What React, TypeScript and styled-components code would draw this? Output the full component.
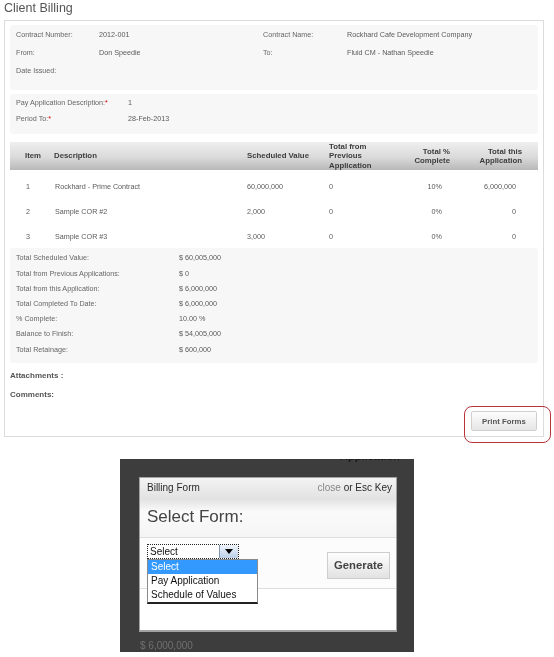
import React from "react";
import styled, { createGlobalStyle } from "styled-components";

const Global = createGlobalStyle`
  html, body { margin: 0; padding: 0; background: #fff; }
  body {
    font-family: "Liberation Sans", Arial, sans-serif;
    width: 554px;
    height: 657px;
    overflow: hidden;
  }
  * { box-sizing: border-box; }
`;

const Page = styled.div`
  display: flex;
  flex-direction: column;
  width: 554px;
  will-change: transform;
`;

const Title = styled.h1`
  margin: 0 0 0 4px;
  height: 20px;
  padding-top: 1px;
  font-size: 12.5px;
  line-height: 15px;
  font-weight: normal;
  color: #555;
`;

const Panel = styled.div`
  margin-left: 4px;
  width: 540px;
  height: 417px;
  border: 1px solid #dcdcdc;
  padding: 4px 5px 5px;
  display: flex;
  flex-direction: column;
`;

const InfoSection = styled.div<{ $cols: string; $row: number; $pad: string; $gap?: number }>`
  background: #f7f7f7;
  border-radius: 3px;
  display: grid;
  grid-template-columns: ${(p) => p.$cols};
  grid-auto-rows: ${(p) => p.$row}px;
  align-items: center;
  padding: ${(p) => p.$pad};
  margin-top: ${(p) => p.$gap ?? 0}px;
  font-size: 7.2px;
  line-height: 9px;
`;

const Label = styled.span`
  color: #666;
  white-space: nowrap;
`;

const Value = styled.span`
  color: #5a5a5a;
  white-space: nowrap;
`;

const Req = styled.span`
  color: #d40000;
`;

const Grid = styled.table`
  width: 528px;
  border-collapse: collapse;
  table-layout: fixed;
  margin-top: 8px;
`;

const Th = styled.th<{ $align?: string; $pr?: number; $pl?: number }>`
  height: 28px;
  padding: 0 ${(p) => p.$pr ?? 0}px 0 ${(p) => p.$pl ?? 0}px;
  text-align: ${(p) => p.$align ?? "left"};
  font-size: 7.8px;
  line-height: 9.5px;
  font-weight: bold;
  color: #3c3c3c;
  vertical-align: middle;
  white-space: nowrap;
  background: linear-gradient(#efefef, #dadada 55%, #b8b8b8);
`;

const Td = styled.td<{ $align?: string; $pr?: number; $pl?: number }>`
  height: 25px;
  padding: 8px ${(p) => p.$pr ?? 0}px 0 ${(p) => p.$pl ?? 0}px;
  text-align: ${(p) => p.$align ?? "left"};
  font-size: 7.2px;
  line-height: 17px;
  color: #5a5a5a;
  vertical-align: top;
  white-space: nowrap;
`;

const NoteLine = styled.div<{ $first?: boolean }>`
  margin-top: ${(p) => (p.$first ? 3 : 0)}px;
  font-size: 8px;
  line-height: 19px;
  font-weight: bold;
  color: #555;
`;

const ActionRow = styled.div`
  display: flex;
  justify-content: flex-end;
  margin-top: 7px;
  padding-right: 1px;
`;

const ActionWrap = styled.span`
  position: relative;
  display: inline-flex;
`;

const PrintButton = styled.button`
  width: 66px;
  height: 20px;
  padding: 0;
  border: 1px solid #cfcfcf;
  border-radius: 2px;
  background: linear-gradient(#fdfdfd, #e6e6e6);
  font-family: "Liberation Sans", Arial, sans-serif;
  font-size: 7.8px;
  font-weight: bold;
  color: #555;
`;

const Highlight = styled.span`
  position: absolute;
  left: -7px;
  top: -5px;
  width: 87px;
  height: 37px;
  border: 1px solid #b8343a;
  border-radius: 8px;
  pointer-events: none;
`;

/* ---------- modal scene ---------- */

const Backdrop = styled.div`
  margin: 22px 0 0 120px;
  width: 294px;
  height: 193px;
  background: #3d3d3d;
  display: flex;
  flex-direction: column;
  overflow: hidden;
`;

const BehindTop = styled.div`
  height: 18px;
  overflow: hidden;
  padding-left: 220px;
`;

const BehindHeading = styled.span`
  display: block;
  margin-top: -8px;
  font-size: 11px;
  line-height: 11px;
  font-weight: bold;
  color: #1a1a1a;
`;

const Dialog = styled.div`
  margin-left: 19px;
  width: 258px;
  height: 156px;
  background: #fff;
  border: 1px solid #a2a2a2;
  border-bottom-width: 2px;
  display: flex;
  flex-direction: column;
`;

const DialogHeader = styled.div`
  height: 20px;
  flex: none;
  display: flex;
  align-items: center;
  justify-content: space-between;
  padding: 0 4px 0 7px;
  background: linear-gradient(#f3f3f3, #e3e3e3);
  font-size: 10px;
  color: #2a2a2a;
`;

const CloseLink = styled.span`
  color: #888;
`;

const DialogTitle = styled.div`
  height: 40px;
  flex: none;
  display: flex;
  align-items: center;
  padding-left: 7px;
  background: linear-gradient(#e0e0e0, #fbfbfb 35%, #f4f4f4);
  border-bottom: 1px solid #dedede;
  font-size: 17px;
  color: #444;
`;

const FormArea = styled.div`
  height: 51px;
  flex: none;
  display: flex;
  align-items: flex-start;
  justify-content: space-between;
  padding: 0 6px 0 7px;
  background: #fcfcfc;
  border-bottom: 1px solid #dedede;
`;

const SelectWrap = styled.div`
  position: relative;
  margin-top: 6px;
`;

const SelectBox = styled.div`
  width: 92px;
  height: 15px;
  display: flex;
  border: 1px dotted #222;
  background: #fff;
`;

const SelectText = styled.span`
  flex: 1;
  padding-left: 2px;
  font-size: 10px;
  line-height: 13px;
  color: #111;
`;

const SelectArrow = styled.span`
  width: 19px;
  display: flex;
  align-items: center;
  justify-content: center;
  background: linear-gradient(#eef3fa, #bcd0e8);
  border-left: 1px solid #7f95b0;
  &::after {
    content: "";
    border-top: 5px solid #000;
    border-left: 4px solid transparent;
    border-right: 4px solid transparent;
  }
`;

const OptionList = styled.ul`
  position: absolute;
  top: 15px;
  left: 0;
  width: 111px;
  margin: 0;
  padding: 0;
  list-style: none;
  background: #fff;
  border: 1px solid #8a8a8a;
  border-bottom: 2px solid #222;
`;

const OptionItem = styled.li<{ $active?: boolean }>`
  height: 14px;
  padding-left: 3px;
  font-size: 10px;
  line-height: 14px;
  color: ${(p) => (p.$active ? "#fff" : "#111")};
  background: ${(p) => (p.$active ? "#3399ff" : "transparent")};
`;

const GenerateButton = styled.button`
  margin-top: 14px;
  width: 63px;
  height: 27px;
  padding: 0;
  border: 1px solid #cdcdcd;
  background: linear-gradient(#fefefe, #e2e2e2);
  font-family: "Liberation Sans", Arial, sans-serif;
  font-size: 11.3px;
  font-weight: bold;
  color: #444;
`;

const BehindBottom = styled.div`
  flex: 1;
  padding: 8px 0 0 20px;
  font-size: 10px;
  line-height: 12px;
  color: #707070;
`;

const items = [
  { item: "1", desc: "Rockhard - Prime Contract", sched: "60,000,000", prev: "0", pct: "10%", app: "6,000,000" },
  { item: "2", desc: "Sample COR #2", sched: "2,000", prev: "0", pct: "0%", app: "0" },
  { item: "3", desc: "Sample COR #3", sched: "3,000", prev: "0", pct: "0%", app: "0" },
];

const totals: [string, string][] = [
  ["Total Scheduled Value:", "$ 60,005,000"],
  ["Total from Previous Applications:", "$ 0"],
  ["Total from this Application:", "$ 6,000,000"],
  ["Total Completed To Date:", "$ 6,000,000"],
  ["% Complete:", "10.00 %"],
  ["Balance to Finish:", "$ 54,005,000"],
  ["Total Retainage:", "$ 600,000"],
];

export default function App() {
  return (
    <Page>
      <Global />
      <Title>Client Billing</Title>
      <Panel>
        <InfoSection $cols="83px 164px 84px 1fr" $row={18.3} $pad="0 6px 10px 6px">
          <Label>Contract Number:</Label>
          <Value>2012-001</Value>
          <Label>Contract Name:</Label>
          <Value>Rockhard Cafe Development Company</Value>
          <Label>From:</Label>
          <Value>Don Speedie</Value>
          <Label>To:</Label>
          <Value>Fluid CM - Nathan Speedie</Value>
          <Label>Date Issued:</Label>
        </InfoSection>

        <InfoSection $cols="112px 1fr" $row={16} $pad="1px 6px 7px 6px" $gap={4}>
          <Label>
            Pay Application Description:<Req>*</Req>
          </Label>
          <Value>1</Value>
          <Label>
            Period To:<Req>*</Req>
          </Label>
          <Value>28-Feb-2013</Value>
        </InfoSection>

        <Grid>
          <colgroup>
            <col style={{ width: 44 }} />
            <col style={{ width: 193 }} />
            <col style={{ width: 82 }} />
            <col style={{ width: 66 }} />
            <col style={{ width: 60 }} />
            <col style={{ width: 83 }} />
          </colgroup>
          <thead>
            <tr>
              <Th $pl={15}>Item</Th>
              <Th>Description</Th>
              <Th>Scheduled Value</Th>
              <Th>
                Total from
                <br />
                Previous
                <br />
                Application
              </Th>
              <Th $align="right" $pr={5}>
                Total %
                <br />
                Complete
              </Th>
              <Th $align="right" $pr={16}>
                Total this
                <br />
                Application
              </Th>
            </tr>
          </thead>
          <tbody>
            {items.map((r) => (
              <tr key={r.item}>
                <Td $pl={16}>{r.item}</Td>
                <Td $pl={1}>{r.desc}</Td>
                <Td>{r.sched}</Td>
                <Td>{r.prev}</Td>
                <Td $align="right" $pr={13}>
                  {r.pct}
                </Td>
                <Td $align="right" $pr={22}>
                  {r.app}
                </Td>
              </tr>
            ))}
          </tbody>
        </Grid>

        <InfoSection $cols="163px 1fr" $row={15.2} $pad="2px 6px 6.6px 6px" $gap={3}>
          {totals.map(([l, v]) => (
            <React.Fragment key={l}>
              <Label>{l}</Label>
              <Value>{v}</Value>
            </React.Fragment>
          ))}
        </InfoSection>

        <NoteLine $first>Attachments :</NoteLine>
        <NoteLine>Comments:</NoteLine>

        <ActionRow>
          <ActionWrap>
            <PrintButton>Print Forms</PrintButton>
            <Highlight />
          </ActionWrap>
        </ActionRow>
      </Panel>

      <Backdrop>
        <BehindTop>
          <BehindHeading>Application</BehindHeading>
        </BehindTop>
        <Dialog>
          <DialogHeader>
            <span>Billing Form</span>
            <span>
              <CloseLink>close</CloseLink> or Esc Key
            </span>
          </DialogHeader>
          <DialogTitle>Select Form:</DialogTitle>
          <FormArea>
            <SelectWrap>
              <SelectBox>
                <SelectText>Select</SelectText>
                <SelectArrow />
              </SelectBox>
              <OptionList>
                <OptionItem $active>Select</OptionItem>
                <OptionItem>Pay Application</OptionItem>
                <OptionItem>Schedule of Values</OptionItem>
              </OptionList>
            </SelectWrap>
            <GenerateButton>Generate</GenerateButton>
          </FormArea>
        </Dialog>
        <BehindBottom>$ 6,000,000</BehindBottom>
      </Backdrop>
    </Page>
  );
}
